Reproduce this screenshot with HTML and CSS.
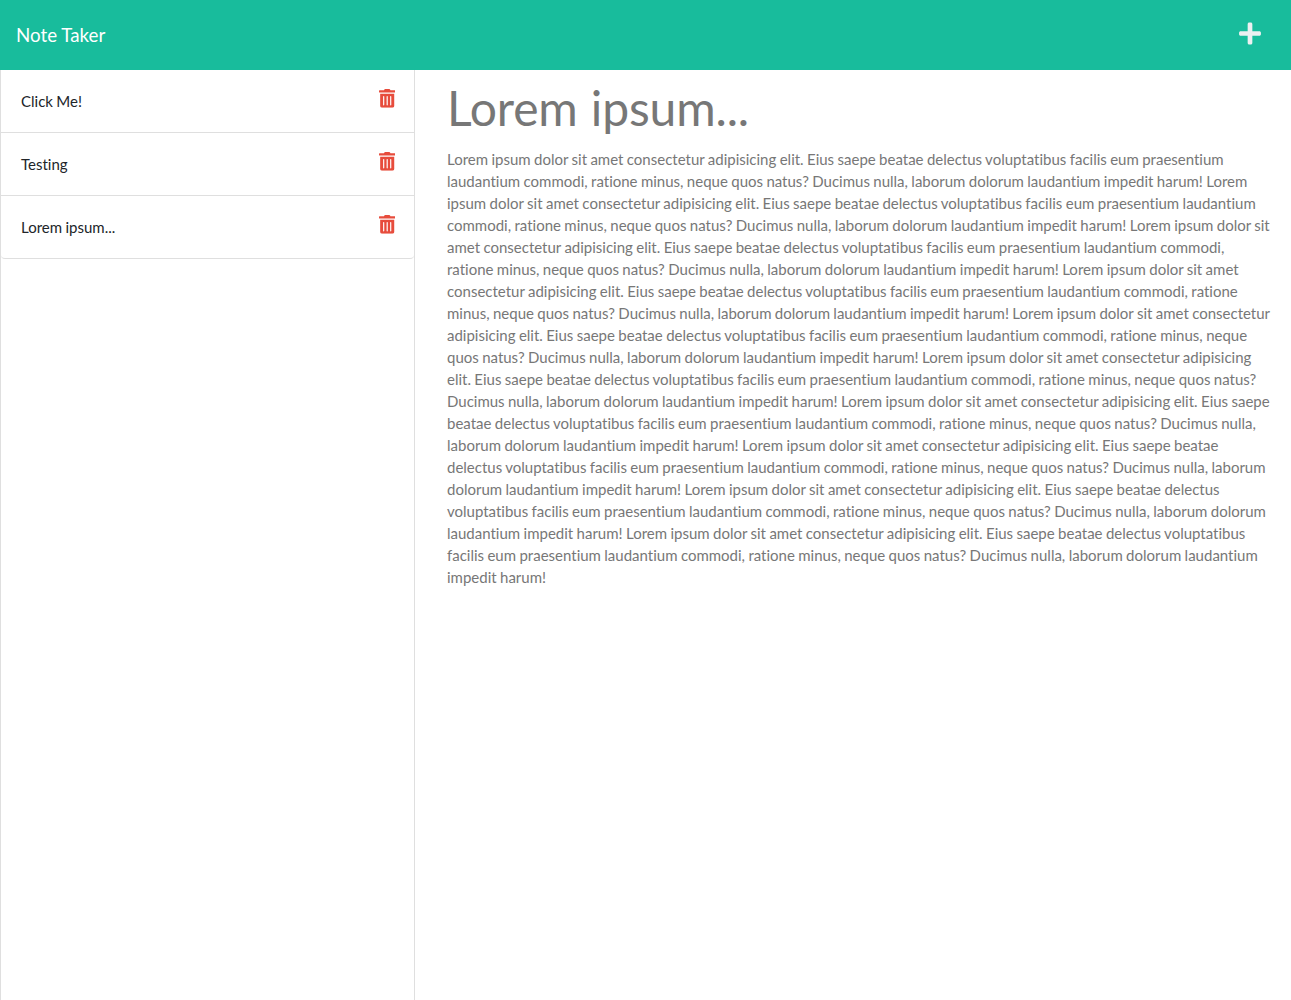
FILE: index.html
```html
<!DOCTYPE html>
<html lang="en">
<head>
<meta charset="utf-8">
<title>Note Taker</title>
<link rel="stylesheet" href="styles.css">
</head>
<body>
<svg class="sprite" aria-hidden="true"><symbol id="trash" viewBox="0 0 448 512"><path d="M32 464a48 48 0 0 0 48 48h288a48 48 0 0 0 48-48V128H32zm272-256a16 16 0 0 1 32 0v224a16 16 0 0 1-32 0zm-96 0a16 16 0 0 1 32 0v224a16 16 0 0 1-32 0zm-96 0a16 16 0 0 1 32 0v224a16 16 0 0 1-32 0zM432 32H312l-9.4-18.7A24 24 0 0 0 281.1 0H166.8a23.72 23.72 0 0 0-21.4 13.3L136 32H16A16 16 0 0 0 0 48v32a16 16 0 0 0 16 16h416a16 16 0 0 0 16-16V48a16 16 0 0 0-16-16z"/></symbol></svg>
<nav class="navbar">
  <a class="brand">Note Taker</a>
  <svg class="new-note" viewBox="0 0 448 512" fill="currentColor"><path d="M416 208H272V64c0-17.67-14.33-32-32-32h-32c-17.67 0-32 14.33-32 32v144H32c-17.67 0-32 14.33-32 32v32c0 17.67 14.33 32 32 32h144v144c0 17.67 14.33 32 32 32h32c17.67 0 32-14.33 32-32V304h144c17.67 0 32-14.33 32-32v-32c0-17.67-14.33-32-32-32z"/></svg>
</nav>
<main class="layout">
  <aside class="list-container">
    <ul class="list-group">
      <li class="list-item"><span>Click Me!</span><svg class="delete-note"><use href="#trash"/></svg></li>
      <li class="list-item"><span>Testing</span><svg class="delete-note"><use href="#trash"/></svg></li>
      <li class="list-item"><span>Lorem ipsum...</span><svg class="delete-note"><use href="#trash"/></svg></li>
    </ul>
  </aside>
  <section class="note">
    <h1 class="note-title">Lorem ipsum...</h1>
    <p class="note-text">Lorem ipsum dolor sit amet consectetur adipisicing elit. Eius saepe beatae delectus voluptatibus facilis eum praesentium
laudantium commodi, ratione minus, neque quos natus? Ducimus nulla, laborum dolorum laudantium impedit harum! Lorem
ipsum dolor sit amet consectetur adipisicing elit. Eius saepe beatae delectus voluptatibus facilis eum praesentium laudantium
commodi, ratione minus, neque quos natus? Ducimus nulla, laborum dolorum laudantium impedit harum! Lorem ipsum dolor sit
amet consectetur adipisicing elit. Eius saepe beatae delectus voluptatibus facilis eum praesentium laudantium commodi,
ratione minus, neque quos natus? Ducimus nulla, laborum dolorum laudantium impedit harum! Lorem ipsum dolor sit amet
consectetur adipisicing elit. Eius saepe beatae delectus voluptatibus facilis eum praesentium laudantium commodi, ratione
minus, neque quos natus? Ducimus nulla, laborum dolorum laudantium impedit harum! Lorem ipsum dolor sit amet consectetur
adipisicing elit. Eius saepe beatae delectus voluptatibus facilis eum praesentium laudantium commodi, ratione minus, neque
quos natus? Ducimus nulla, laborum dolorum laudantium impedit harum! Lorem ipsum dolor sit amet consectetur adipisicing
elit. Eius saepe beatae delectus voluptatibus facilis eum praesentium laudantium commodi, ratione minus, neque quos natus?
Ducimus nulla, laborum dolorum laudantium impedit harum! Lorem ipsum dolor sit amet consectetur adipisicing elit. Eius saepe
beatae delectus voluptatibus facilis eum praesentium laudantium commodi, ratione minus, neque quos natus? Ducimus nulla,
laborum dolorum laudantium impedit harum! Lorem ipsum dolor sit amet consectetur adipisicing elit. Eius saepe beatae
delectus voluptatibus facilis eum praesentium laudantium commodi, ratione minus, neque quos natus? Ducimus nulla, laborum
dolorum laudantium impedit harum! Lorem ipsum dolor sit amet consectetur adipisicing elit. Eius saepe beatae delectus
voluptatibus facilis eum praesentium laudantium commodi, ratione minus, neque quos natus? Ducimus nulla, laborum dolorum
laudantium impedit harum! Lorem ipsum dolor sit amet consectetur adipisicing elit. Eius saepe beatae delectus voluptatibus
facilis eum praesentium laudantium commodi, ratione minus, neque quos natus? Ducimus nulla, laborum dolorum laudantium
impedit harum!</p>
  </section>
</main>
</body>
</html>
```
FILE: styles.css
```css
* { box-sizing: border-box; }
body {
  margin: 0;
  height: 100vh;
  display: flex;
  flex-direction: column;
  overflow: hidden;
  font: 15px/1.5 Lato, sans-serif;
  font-variant-ligatures: none;
  color: #212529;
  background: #fff;
}
.sprite { display: none; }
.navbar {
  height: 70px;
  flex: none;
  display: flex;
  align-items: center;
  justify-content: space-between;
  padding: 0 30px 0 16px;
  background: #18bc9c;
}
.brand { color: #fff; font-size: 18.75px; }
.new-note { width: 22px; height: 25px; margin-top: -3px; color: #ecf0f1; }
.layout { flex: 1; display: flex; }
.list-container {
  width: 415px;
  flex: none;
  border: solid #dfdfdf;
  border-width: 0 1px;
}
.list-group { list-style: none; margin: 0; padding: 0; }
.list-item {
  height: 63px;
  display: flex;
  justify-content: space-between;
  padding: 20px 19px 0 20px;
  border-bottom: 1px solid #dfdfdf;
  word-spacing: -0.45px;
}
.list-item:last-child { border-radius: 0 0 4px 4px; }
.delete-note { width: 16.4px; height: 18.75px; margin-top: -1px; fill: #e74c3c; }
.note { flex: 1; padding: 9px 16px 0 32px; color: #777; }
.note-title {
  margin: 0;
  font-size: 48px;
  font-weight: 400;
  line-height: 58px;
  letter-spacing: -0.15px;
  word-spacing: 1px;
}
.note-text {
  margin: 11px 0 0;
  line-height: 22px;
  white-space: pre;
  word-spacing: -0.45px;
}
```
